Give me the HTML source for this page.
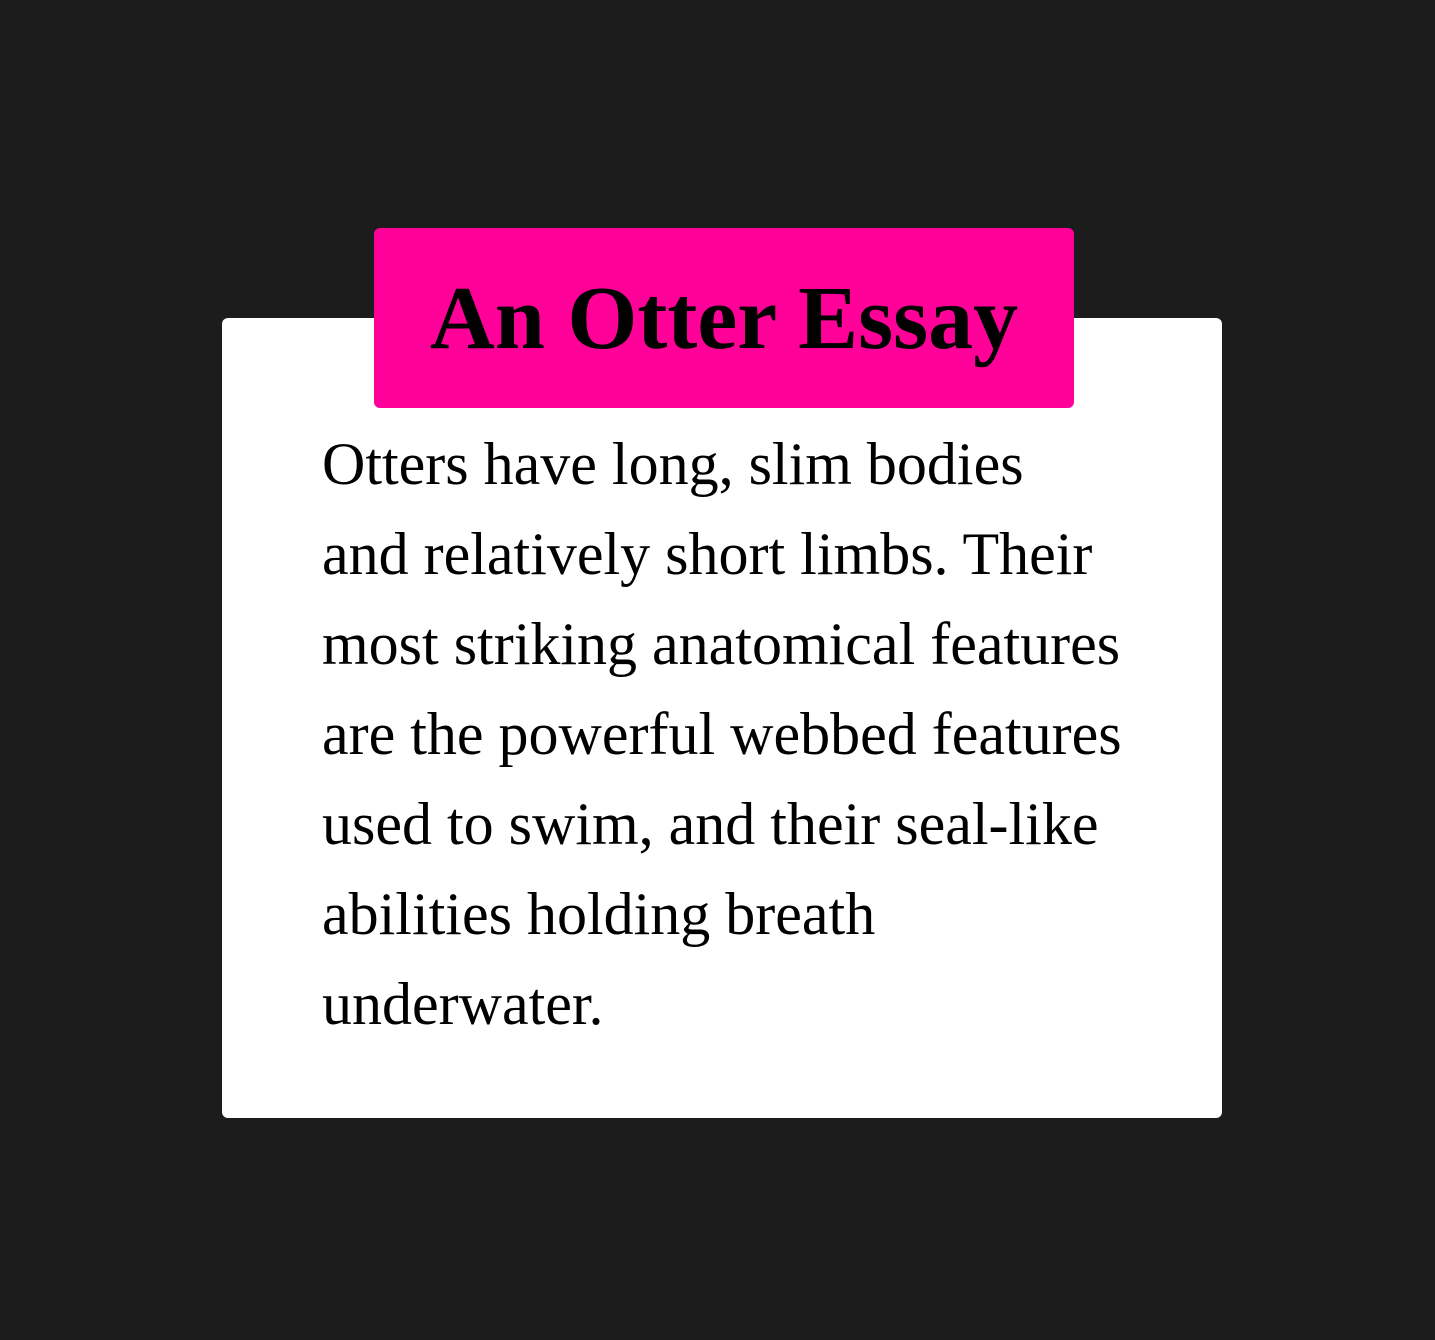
<!DOCTYPE html>
<html><head><style>
html,body{margin:0;padding:0;background:#1c1c1c;width:1435px;height:1340px;overflow:hidden}
.card{position:absolute;left:222px;top:318px;width:1000px;height:800px;background:#fff;border-radius:6px}
.tag{position:absolute;left:374px;top:228px;width:700px;height:180px;background:#ff0099;border-radius:6px;display:flex;align-items:center;justify-content:center;font:bold 90px "Liberation Serif",serif;color:#000}
.txt{position:absolute;left:322px;top:419px;width:900px;font:60px/90px "Liberation Serif",serif;color:#000}
</style></head><body>
<div class="card"></div>
<div class="tag">An Otter Essay</div>
<div class="txt">Otters have long, slim bodies<br>and relatively short limbs. Their<br>most striking anatomical features<br>are the powerful webbed features<br>used to swim, and their seal-like<br>abilities holding breath<br>underwater.</div>
</body></html>
